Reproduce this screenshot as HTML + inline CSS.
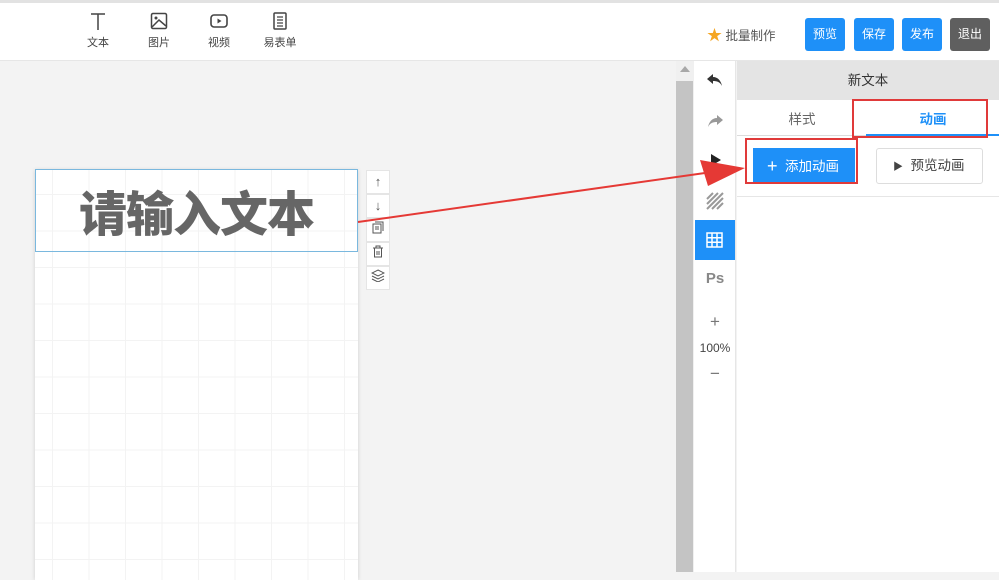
<!DOCTYPE html>
<html><head><meta charset="utf-8"><style>
*{margin:0;padding:0;box-sizing:border-box}
body{width:999px;height:572px;overflow:hidden;position:relative;background:#f3f3f3;font-family:"Liberation Sans","Noto Sans CJK SC",sans-serif;color:#333}
.top{position:absolute;left:0;top:0;width:999px;height:61px;background:#fff;border-top:3px solid #e2e2e2;border-bottom:1px solid #e6e6e6}
.tool{position:absolute;top:8px;text-align:center;font-size:11px;color:#444;width:40px}
.tool svg{display:block;margin:0 auto 3px}
.btn{position:absolute;top:15px;height:33px;border-radius:3px;color:#fff;font-size:12px;line-height:33px;text-align:center;background:#1e90f8}
.abs{position:absolute}
.grid{background-color:#fff;background-image:linear-gradient(#f3f3f3 1px,transparent 1px),linear-gradient(90deg,#f3f3f3 1px,transparent 1px);background-size:36.5px 36.5px;background-position:17px 24px;box-shadow:0 0 4px rgba(0,0,0,.15)}
.side{position:absolute;width:24px;height:24px;left:366px;background:#fff;border:1px solid #e5e5e5;text-align:center;font-size:13px;line-height:22px;color:#555}
</style></head><body>
<div class="top">
 <div class="tool" style="left:78px"><svg width="20" height="20" viewBox="0 0 20 20"><path d="M3 3H17M10 3V19" stroke="#444" stroke-width="1.5" fill="none"/></svg>文本</div>
 <div class="tool" style="left:139px"><svg width="20" height="20" viewBox="0 0 20 20"><rect x="2.5" y="2.5" width="15" height="15" rx="1.5" stroke="#444" stroke-width="1.5" fill="none"/><circle cx="7" cy="7" r="1.5" fill="#444"/><path d="M3 16L10 9L17 15" stroke="#444" stroke-width="1.5" fill="none"/></svg>图片</div>
 <div class="tool" style="left:199px"><svg width="20" height="20" viewBox="0 0 20 20"><rect x="2" y="4" width="16" height="12" rx="3" stroke="#444" stroke-width="1.6" fill="none"/><path d="M8.5 7.5L12.5 10L8.5 12.5Z" fill="#444"/></svg>视频</div>
 <div class="tool" style="left:260px"><svg width="20" height="20" viewBox="0 0 20 20"><rect x="4" y="2" width="12" height="16" rx="1" stroke="#444" stroke-width="1.5" fill="none"/><path d="M7 6H13M7 9H13M7 12H13M7 15H13" stroke="#444" stroke-width="1.2"/></svg>易表单</div>
 <div class="abs" style="left:707px;top:21px;font-size:12.5px;color:#555"><span style="color:#f5a623;font-size:15px">★</span> 批量制作</div>
 <div class="btn" style="left:805px;width:40px">预览</div>
 <div class="btn" style="left:854px;width:40px">保存</div>
 <div class="btn" style="left:902px;width:40px">发布</div>
 <div class="btn" style="left:950px;width:40px;background:#5f5f5f">退出</div>
</div>
<div class="abs" style="left:676px;top:61px;width:18px;height:511px;background:#f0f0f0"></div>
<div class="abs" style="left:676px;top:81px;width:17px;height:491px;background:#c4c4c4"></div>
<div class="abs" style="left:680px;top:66px;width:0;height:0;border:5px solid transparent;border-bottom:6px solid #a8a8a8;border-top:0"></div>
<div class="abs" style="left:694px;top:61px;width:42px;height:511px;background:#fff;border-right:1px solid #e6e6e6"></div>
<svg class="abs" style="left:706px;top:72px" width="18" height="16" viewBox="0 0 18 16"><path d="M7 2L1 7L7 12V9C11 9 14 10 16 14C15 9 12 5 7 5Z" fill="#333"/></svg>
<svg class="abs" style="left:706px;top:113px" width="18" height="16" viewBox="0 0 18 16"><path d="M11 2L17 7L11 12V9C7 9 4 10 2 14C3 9 6 5 11 5Z" fill="#999"/></svg>
<svg class="abs" style="left:710px;top:153px" width="12" height="14"><path d="M1 1L11 7L1 13Z" fill="#222"/></svg>
<svg class="abs" style="left:706px;top:192px" width="18" height="18" viewBox="0 0 18 18"><path d="M1 7L7 1M1 12L12 1M1 17L17 1M6 17L17 6M11 17L17 11" stroke="#999" stroke-width="2"/></svg>
<div class="abs" style="left:695px;top:220px;width:40px;height:40px;background:#1e90f8"></div>
<svg class="abs" style="left:706px;top:232px" width="17" height="16" viewBox="0 0 17 16"><rect x="1" y="1" width="15" height="14" fill="none" stroke="#fff" stroke-width="1.5"/><path d="M6 1V15M11 1V15M1 5.7H16M1 10.3H16" stroke="#fff" stroke-width="1.5"/></svg>
<div class="abs" style="left:694px;top:270px;width:42px;text-align:center;font-weight:bold;font-size:15px;color:#888">Ps</div>
<div class="abs" style="left:694px;top:312px;width:42px;text-align:center;font-size:17px;color:#777">+</div>
<div class="abs" style="left:694px;top:341px;width:42px;text-align:center;font-size:12px;color:#444">100%</div>
<div class="abs" style="left:694px;top:364px;width:42px;text-align:center;font-size:17px;color:#777">−</div>
<div class="abs" style="left:737px;top:61px;width:262px;height:511px;background:#fff"></div>
<div class="abs" style="left:737px;top:61px;width:262px;height:39px;background:#e4e4e4;text-align:center;line-height:39px;font-size:13.5px;color:#333">新文本</div>
<div class="abs" style="left:737px;top:135px;width:262px;height:1px;background:#dcdcdc"></div>
<div class="abs" style="left:866px;top:134px;width:133px;height:2px;background:#1e90f8"></div>
<div class="abs" style="left:737px;top:108px;width:130px;text-align:center;font-size:13.5px;color:#666">样式</div>
<div class="abs" style="left:867px;top:108px;width:132px;text-align:center;font-size:13.5px;color:#1e90f8;font-weight:bold">动画</div>
<div class="abs" style="left:852px;top:99px;width:136px;height:39px;border:2px solid #e03a3a"></div>
<div class="abs" style="left:737px;top:196px;width:262px;height:1px;background:#e6e6e6"></div>
<div class="abs" style="left:753px;top:148px;width:102px;height:36px;background:#1e90f8;color:#fff;font-size:13.5px;line-height:36px;padding-left:14px"><span style="font-size:18px;vertical-align:-1px">+</span>&nbsp; 添加动画</div>
<div class="abs" style="left:745px;top:138px;width:113px;height:46px;border:2px solid #e03a3a"></div>
<div class="abs" style="left:876px;top:148px;width:107px;height:36px;border:1px solid #ddd;border-radius:3px;font-size:13.5px;line-height:34px;color:#444;padding-left:16px"><span style="font-size:10px">▶</span>&nbsp; 预览动画</div>
<div class="abs grid" style="left:35px;top:170px;width:323px;height:410px"></div>
<div class="abs" style="left:35px;top:169px;width:323px;height:83px;border:1px solid #7ab8de;text-align:center;line-height:81px;font-size:48px;font-weight:900;color:#666;font-family:'Noto Sans CJK SC',sans-serif;letter-spacing:-1px">请输入文本</div>
<div class="side" style="top:170px">↑</div>
<div class="side" style="top:194px">↓</div>
<div class="side" style="top:218px"><svg width="12" height="13" viewBox="0 0 12 13"><rect x="1" y="3" width="8" height="9" fill="none" stroke="#555"/><path d="M3 1H11V10" fill="none" stroke="#555"/><path d="M3 6H7M3 8H7" stroke="#555"/></svg></div>
<div class="side" style="top:242px"><svg width="12" height="13" viewBox="0 0 12 13"><path d="M1 3H11M4 3V1H8V3M2.5 3V12H9.5V3M5 6V10M7 6V10" fill="none" stroke="#555"/></svg></div>
<div class="side" style="top:266px"><svg width="14" height="13" viewBox="0 0 14 13"><path d="M7 1L13 4L7 7L1 4Z M1 7L7 10L13 7 M1 10L7 13L13 10" fill="none" stroke="#555"/></svg></div>
<svg class="abs" style="left:0;top:0" width="999" height="572"><path d="M358 222L712 172" stroke="#e53935" stroke-width="2"/><path d="M700 160L745 168L708 186Z" fill="#e53935"/></svg>
</body></html>
